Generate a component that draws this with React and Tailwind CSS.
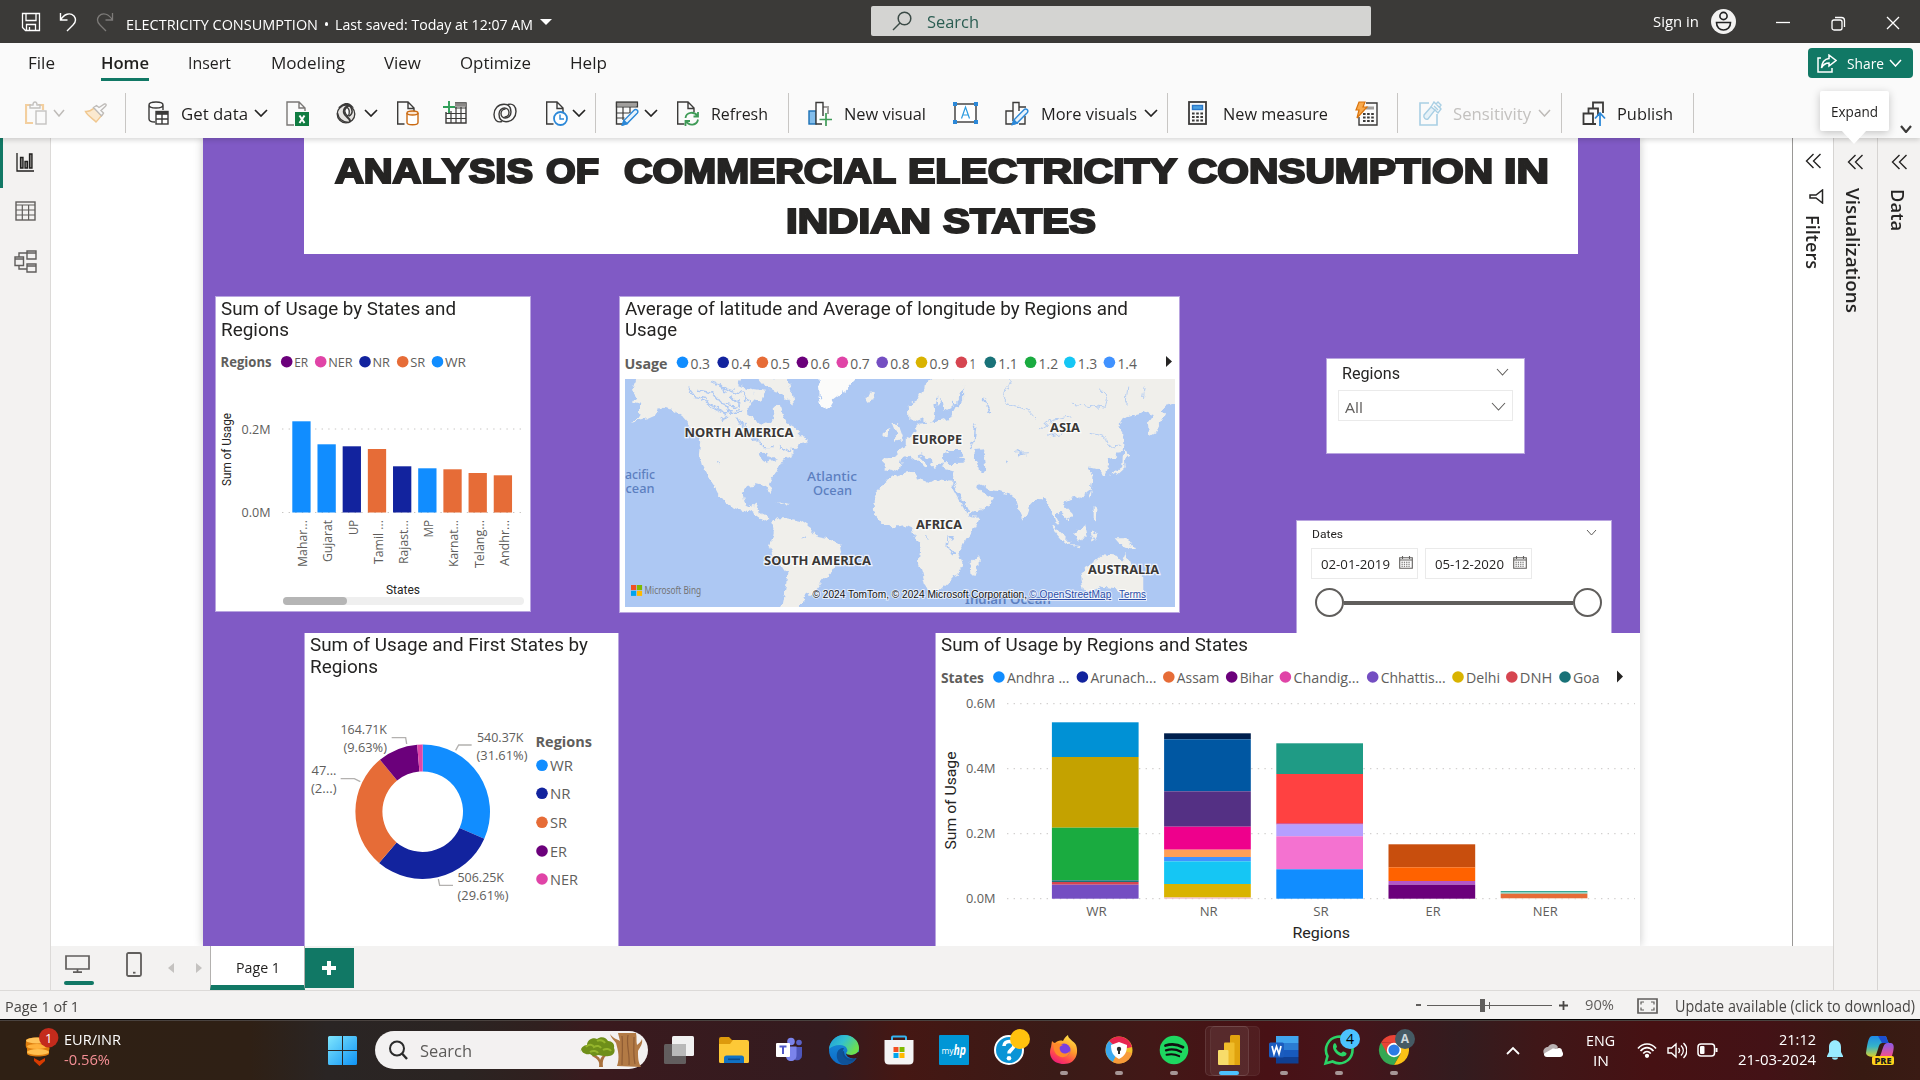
import React, { useLayoutEffect, useRef } from "react";

/* Text that is squeezed or stretched to the width of its box */
function Fit({ className = "", vertical = false, children }) {
  const box = useRef(null);
  const ink = useRef(null);
  useLayoutEffect(() => {
    const b = box.current;
    const i = ink.current;
    i.style.transform = "none";
    const r = vertical ? b.clientHeight / i.offsetHeight : b.clientWidth / i.getBoundingClientRect().width;
    i.style.transform = vertical ? `scaleY(${r})` : `scaleX(${r})`;
  }, [vertical, children]);
  return (
    <span ref={box} className={"block shrink-0 whitespace-nowrap " + className}>
      <span ref={ink} className={"inline-block origin-top-left whitespace-pre " + (vertical ? "[writing-mode:vertical-rl]" : "")}>
        {children}
      </span>
    </span>
  );
}

/* Chart text with a fixed run length */
function T({ x, y, w, size = 12, fill = "#605e5c", font = "Open Sans", weight = 400, rot, children, ...rest }) {
  return (
    <text
      x={x}
      y={y}
      textLength={w}
      lengthAdjust="spacingAndGlyphs"
      fontSize={size}
      fill={fill}
      fontWeight={weight}
      fontFamily={`"${font}", sans-serif`}
      transform={rot ? `rotate(${rot} ${x} ${y})` : undefined}
      {...rest}
    >
      {children}
    </text>
  );
}

function Ico({ w, h, className = "", children, ...p }) {
  return (
    <svg width={w} height={h} viewBox={`0 0 ${w} ${h}`} fill="none" stroke="#3b3a39" strokeWidth="1.4" className={"block shrink-0 " + className} {...p}>
      {children}
    </svg>
  );
}

const Chev = ({ className = "", color = "#252423", w = 14, h = 8, sw = 1.7 }) => (
  <Ico w={w} h={h} className={className} stroke={color} strokeWidth={sw}>
    <path d={`M1 1 L${w / 2} ${h - 1} L${w - 1} 1`} />
  </Ico>
);

const Sep = ({ className }) => <span className={"block h-10 w-px shrink-0 bg-[#c8c6c4] " + className} />;

/* ---------- title bar ---------- */
function TitleBar() {
  return (
    <div className="flex h-[43px] items-center bg-[#3b3a38] text-white">
      <Ico w={20} h={20} className="ml-[21px]" stroke="#fff" strokeWidth="1.3">
        <path d="M1.5 1.5h17v17h-14l-3-3zM5 1.5v7h10v-7M5.500 18.500v-6h9v6M8.500 18v-3" />
      </Ico>
      <Ico w={18} h={20} className="ml-[18px]" stroke="#fff" strokeWidth="1.4">
        <path d="M1.500 1v7h7M1.500 8C5 2 11 0 15 4c3 4 1 7-1 9l-6 6" />
      </Ico>
      <Ico w={18} h={20} className="ml-[19px]" stroke="#7d7b79" strokeWidth="1.3">
        <path d="M16.500 1v7h-7M16.500 8C13 2 7 0 3 4c-3 4-1 7 1 9l6 6" />
      </Ico>
      <div className="ml-[12px] flex items-center pt-[5px] text-[15px]">
        <Fit className="w-[192px]">ELECTRICITY CONSUMPTION</Fit>
        <span className="ml-[6.500px] size-[3.500px] rounded-full bg-white" />
        <Fit className="ml-[7px] w-[198px]">Last saved: Today at 12:07 AM</Fit>
      </div>
      <Ico w={12} h={6} className="ml-[7px]" stroke="none">
        <path d="M0 0h12l-6 6z" fill="#fff" />
      </Ico>
      <div className="ml-[319px] mb-[1px] flex h-[30px] w-[500px] items-center rounded-[2px] bg-[#d4d4d2]">
        <Ico w={20} h={20} className="ml-[21px]" stroke="#3b4a46" strokeWidth="1.5">
          <circle cx="12.500" cy="7.500" r="6.300" />
          <path d="M8 12 L1 19" />
        </Ico>
        <Fit className="ml-[15px] w-[52px] pt-[1px] text-base text-[#2b5d52]">Search</Fit>
      </div>
      <Fit className="ml-[282px] w-[46px] text-[14px]">Sign in</Fit>
      <Ico w={25} h={25} className="ml-[12px]" stroke="#222" strokeWidth="1.6">
        <circle cx="12.500" cy="12.500" r="12.500" fill="#f3f2f1" stroke="none" />
        <circle cx="12.500" cy="7" r="3.600" />
        <path d="M5.500 13.500h14c0 4.500-3 7.500-7 7.500s-7-3-7-7.500z" />
      </Ico>
      <Ico w={14} h={14} className="ml-[40px] mt-[3px]" stroke="#fff" strokeWidth="1.3">
        <path d="M0 6.500h14" />
      </Ico>
      <Ico w={15} h={15} className="ml-[41px] mt-[3px]" stroke="#fff" strokeWidth="1.3">
        <rect x="1" y="4" width="10" height="10" rx="2" />
        <path d="M4 1.500h6.500a3 3 0 0 1 3 3V11" />
      </Ico>
      <Ico w={14} h={14} className="ml-[40px] mt-[3px]" stroke="#fff" strokeWidth="1.3">
        <path d="M1 1l12 12M13 1L1 13" />
      </Ico>
    </div>
  );
}

/* ---------- ribbon ---------- */
const tabs = [
  ["File", "ml-[28px] w-[27px]"],
  ["Home", "ml-[46px] w-[48px] font-semibold"],
  ["Insert", "ml-[39px] w-[43px]"],
  ["Modeling", "ml-[40px] w-[74px]"],
  ["View", "ml-[39px] w-[37px]"],
  ["Optimize", "ml-[39px] w-[71px]"],
  ["Help", "ml-[39px] w-[37px]"],
];

const Page = ({ children }) => (
  <>
    <path d="M20 11V7l-6-6H1.700v22H9" stroke="none" fill="#fafafa" />
    <path d="M8.500 23H1.700V1H12l6 6v4M12 1v6.500h6" />
    {children}
  </>
);

const Pencil = ({ x = 0, y = 0 }) => (
  <g transform={`translate(${x} ${y})`} stroke="#2b88d8" strokeWidth="1.400">
    <path d="M1 16l1.400-4.500L12.500 1.200c1-1 2.800-.8 3.500.3.600.9.400 1.900-.3 2.700L5.600 14.600z" fill="#e8f3fc" />
    <path d="M1 16l1.400-4.500 3.200 3.100z" fill="#2b88d8" />
  </g>
);

function Ribbon() {
  return (
    <div className="relative z-10 h-[95px] bg-[#fafafa] text-[#201f1e] shadow-[0_2px_5px_rgba(0,0,0,0.16)]">
      <div className="flex h-[38px] items-start text-[17px]">
        {tabs.map(([name, cls]) => (
          <div key={name} className={"flex h-full items-center pt-1 " + (name === "Home" ? "border-b-[3px] border-[#117865] " : "border-b-[3px] border-transparent ") + cls}>
            <Fit className="w-full">{name}</Fit>
          </div>
        ))}
        <div className="ml-auto mr-[7px] mt-[5px] flex h-[30px] w-[105px] shrink-0 items-center rounded-[4px] bg-[#117865] text-white">
          <Ico w={20} h={19} className="ml-[9px]" stroke="#fff" strokeWidth="1.500">
            <path d="M4 4H1v14h14v-4M12 1l7 5.500-7 5.500V9C8 9 6 11 4.500 14 5 8 8 5 12 4.500z" />
          </Ico>
          <Fit className="ml-[10px] w-[37px] text-[15px]">Share</Fit>
          <Chev className="ml-[5px]" color="#fff" w={13} h={8} sw={1.500} />
        </div>
      </div>
      <div className="flex h-[57px] items-center pt-[7px] text-[17px]">
        <Ico w={22} h={24} className="ml-[25px]" stroke="#c4c2c0">
          <path d="M8 22H1V4h5M13 4h5v5" stroke="#f3cf9f" strokeWidth="2.200" />
          <path d="M5 7V4h3c0-4 4-4 4 0h3v3z" fill="#fafafa" />
          <rect x="11" y="10" width="10" height="13" fill="#fafafa" />
        </Ico>
        <Chev className="ml-[6px]" color="#bebbb8" w={12} sw={1.500} />
        <Ico w={23} h={20} className="ml-[19px]" stroke="#bebbb8">
          <path d="M1.500 8.500C6 9 9 6 11 4.500l7.500 7C16 14 15 16 12 19 9 16 3 12 1.500 8.500z" stroke="#f0c78f" fill="#fbe9cf" />
          <path d="M9.500 4.500l3-2 2.500 2 5.500-3.500c1.500-.5 2.300 1 1 2.200L17 7.500l2.500 2.500-2 3z" fill="#fafafa" />
        </Ico>
        <Sep className="ml-[18px]" />
        <Ico w={22} h={24} className="ml-[21px]">
          <path d="M2 4v14c0 2 3 3 6 3M16 4v5M2 4c0-4 14-4 14 0s-14 4-14 0z" />
          <rect x="9" y="10.500" width="12" height="12.500" fill="#fff" />
          <path d="M9 12.300h12" strokeWidth="3" />
          <path d="M15 13v10M9 18h12" />
        </Ico>
        <Fit className="ml-[12px] w-[67px] pt-px">Get data</Fit>
        <Chev className="ml-[6px]" />
        <Ico w={23} h={25} className="ml-[18px]" stroke="#797775">
          <path d="M8 24H1V1h12l6 6v3M13 1v6h6" />
          <rect x="9" y="11" width="14" height="14" fill="#107c41" stroke="none" />
          <path d="M13.500 14.500l5 7.500M18.500 14.500l-5 7.500" stroke="#fff" strokeWidth="2" />
        </Ico>
        <Ico w={20} h={21} className="ml-[27px]" strokeWidth="1.300">
          <circle cx="10" cy="11" r="8.800" fill="#e6e4e2" />
          <path d="M3 5C8 0 12 0 15 3 10 2 7 6 8 10s7 5 6 9" strokeWidth="2" />
          <path d="M1.500 10c1 6 6 9 11 9.500M14 3c3 4 3 8-1 10" strokeWidth="1.500" />
          <path d="M11 4c-3 3-3 6 1 9 2-3 2-6-1-9z" fill="#fff" />
        </Ico>
        <Chev className="ml-[8px]" />
        <Ico w={23} h={25} className="ml-[18px]">
          <Page />
          <g stroke="#ca6a12">
            <path d="M11 12v9.500c0 3 11 3 11 0V12" fill="#fff" />
            <ellipse cx="16.500" cy="12" rx="5.500" ry="2" fill="#fbe6d2" />
          </g>
        </Ico>
        <Ico w={24} h={24} className="ml-[24px]">
          <path d="M12 2h11v20H3V11" />
          <path d="M12 4h11" strokeWidth="3.500" stroke="#8a8886" />
          <path d="M12 7h11M3 12.500h20M3 17.500h20M8 10v12M13 6v16M18 6v16" strokeWidth="1.200" />
          <path d="M0 6h12M6 0v12" stroke="#2f9e58" strokeWidth="1.900" />
        </Ico>
        <Ico w={24} h={20} className="ml-[26px]">
          <path d="M9 18.500c-5 1.500-8-2-8-7C1 6 5 1.300 11 1.300c5 0 7 3.700 7 7.700s-3 6-5.500 6S8 13 8 10.500s2-4.500 4.500-4.500" />
          <path d="M15 1.500c5-1.500 8 2 8 7 0 5.500-4 10.200-10 10.200-5 0-7-3.700-7-7.700s3-6 5.500-6 4.500 2 4.500 4.500-2 4.500-4.500 4.500" />
        </Ico>
        <Ico w={23} h={25} className="ml-[28px]">
          <Page />
          <circle cx="15.500" cy="17.500" r="6.500" stroke="#2b88d8" strokeWidth="1.800" fill="#fff" />
          <path d="M15 13.500v4.500h4" stroke="#2b88d8" />
        </Ico>
        <Chev className="ml-[4px]" />
        <Sep className="ml-[9px]" />
        <Ico w={24} h={25} className="ml-[19px]">
          <path d="M8 23H1.500V1.500H22V6" />
          <path d="M1.500 3.500H22" strokeWidth="4" stroke="#a19f9d" />
          <path d="M1.500 1h21v5h-21zM1.500 12h13M1.500 17h8M8 6v13M15 6v6" strokeWidth="1.200" />
          <Pencil x={6.500} y={8} />
        </Ico>
        <Chev className="ml-[5px]" />
        <Ico w={23} h={25} className="ml-[18px]">
          <Page />
          <g stroke="#3f9b57" strokeWidth="1.800">
            <path d="M9.500 17c.5-6 9-7 12-2M22 11v4.500h-4.500M22 18.500c-1 6-9 7-12 1.500M9.500 25v-5H14" />
          </g>
        </Ico>
        <Fit className="ml-[12px] w-[57px] pt-px">Refresh</Fit>
        <Sep className="ml-[20px]" />
        <Ico w={24} h={25} className="ml-[19px]">
          <path d="M14 6h6v7" stroke="#a19f9d" strokeWidth="2" />
          <rect x="1" y="10" width="7" height="13" fill="#83beec" stroke="#1a6fb5" />
          <path d="M14 23H8V1.500h7V15" fill="#fff" />
          <path d="M18 12v13M11.500 18.500H24" stroke="#3f9b57" strokeWidth="1.700" />
        </Ico>
        <Fit className="ml-[12px] w-[82px] pt-px">New visual</Fit>
        <Ico w={25} h={22} className="ml-[27px]">
          <rect x="2" y="2" width="21" height="18" fill="#fff" />
          <path d="M0 0h4v4H0zM21 0h4v4h-4zM0 18h4v4H0zM21 18h4v4h-4z" fill="#2b88d8" stroke="none" />
          <path d="M8.500 16.500l4-11.500 4 11.500M9.800 13h5.400" stroke="#2b9be0" strokeWidth="1.200" />
        </Ico>
        <Ico w={24} h={25} className="ml-[27px]">
          <path d="M8 23H1V10h7M8 20V1.500h6V10M20 15v8h-6M14 6h7" strokeWidth="1.400" />
          <Pencil x={6.500} y={7.500} />
        </Ico>
        <Fit className="ml-[12px] w-[96px] pt-px">More visuals</Fit>
        <Chev className="ml-[7px]" />
        <Sep className="ml-[9px]" />
        <Ico w={19} h={24} className="ml-[20px]">
          <rect x="1" y="1" width="17" height="22" strokeWidth="1.800" />
          <rect x="4.500" y="4.500" width="10" height="4" fill="#4ba0e2" stroke="#2b78c8" />
          <path d="M4 12.500h11M4 16h11M4 19.500h11" strokeWidth="2.200" strokeDasharray="2.600 1.600" />
        </Ico>
        <Fit className="ml-[16px] w-[105px] pt-px">New measure</Fit>
        <Ico w={23} h={25} className="ml-[27px]">
          <path d="M11 2h11v22H4V16" />
          <path d="M11 7h8" stroke="#a19f9d" strokeWidth="3" />
          <path d="M8 13h11M8 16.500h11M8 20h11" strokeWidth="2.200" strokeDasharray="2.600 1.500" />
          <path d="M4 1h6L8 6h4L2 17l2-8H1z" fill="#f9a94b" stroke="#d9730d" strokeWidth="1.200" />
        </Ico>
        <Sep className="ml-[19px]" />
        <Ico w={23} h={25} className="ml-[21px]" stroke="#a9cfe4">
          <path d="M10 2H1v22h17V13" strokeWidth="1.600" />
          <path d="M5 14l7-8 4 3-7 9c-2 1-5-1-4-4z" fill="#e7f2f8" />
          <path d="M12 6l3-5 2 2 2-2 3 3-1.500 2L22 8l-3 4-3-3M15 5l4 4M17 3l4 4" />
        </Ico>
        <Fit className="ml-[11px] w-[78px] pt-px text-[#c3c1bf]">Sensitivity</Fit>
        <Chev className="ml-[7px]" color="#bebbb8" w={13} sw={1.500} />
        <Sep className="ml-[10px]" />
        <Ico w={24} h={25} className="ml-[20px]" strokeWidth="1.800">
          <path d="M11 8V1.500h10V12M6.500 12V7.500H16V15M14 23H1.500V12.500H11V23" />
          <path d="M18 25V12M13 17.500l5-5.500 5 5.500" stroke="#2b88d8" />
        </Ico>
        <Fit className="ml-[11px] w-[56px] pt-px">Publish</Fit>
        <Sep className="ml-[20px]" />
        <Chev className="ml-auto mr-[8px] mt-[32px]" w={12} h={8} sw={2.200} color="#3b3a39" />
      </div>
      <div className="absolute left-[1820px] top-[48px] flex h-[40px] w-[69px] items-center rounded-[2px] bg-white pl-[11px] pt-[1px] shadow-[0_2px_8px_rgba(0,0,0,0.22)]">
        <Fit className="w-[47px] text-[14.500px]">Expand</Fit>
        <svg className="absolute left-[21px] top-[39px]" width="26" height="15" viewBox="0 0 26 15">
          <path d="M0 0h26L13 14z" fill="#fff" />
        </svg>
      </div>
    </div>
  );
}

/* ---------- left rail ---------- */
function Rail() {
  return (
    <div className="flex w-[51px] shrink-0 flex-col border-r border-[#dcdad8] bg-[#f3f2f1]">
      <div className="flex h-[50px] items-center border-l-[3px] border-[#117865] pl-[13px] pb-[2px]">
        <Ico w={18} h={19} stroke="#201f1e" strokeWidth="1.300">
          <path d="M1 0v18h17" />
          <path d="M4.500 4.500h2.500V15H4.500zM9 8.500h2.500V15H9zM13.500 1h2.500v14h-2.500z" fill="#8a8886" />
        </Ico>
      </div>
      <Ico w={21} h={20} className="ml-[15px] mt-[13px]" stroke="#605e5c">
        <rect x="1" y="1" width="19" height="18" />
        <path d="M1 4h19M1 9h19M1 14h19M7.300 4v15M13.600 4v15" strokeWidth="1.200" />
      </Ico>
      <Ico w={23} h={23} className="ml-[14px] mt-[29px]" stroke="#605e5c">
        <path d="M13 1h9v8h-9zM13 3h9M1 7h8.500v8.500H1zM1 9h8.500M13 14h9v8h-9zM13 16h9M5 7V3h8M5 15.500V19h8" />
      </Ico>
    </div>
  );
}

/* ---------- report visuals ---------- */
const C = { WR: "#118dff", NR: "#12239e", SR: "#e66c37", ER: "#6b007b", NER: "#e044a7" };

const statesBars = [
  ["Mahar...", 421.3, C.WR, 47],
  ["Gujarat", 444.3, C.WR, 42],
  ["UP", 446.3, C.NR, 15],
  ["Tamil ...", 449, C.SR, 44],
  ["Rajast...", 466.3, C.NR, 44],
  ["MP", 468.3, C.WR, 17.500],
  ["Karnat...", 469.3, C.SR, 47],
  ["Telang...", 473, C.SR, 48],
  ["Andhr...", 475.3, C.SR, 46],
];

const Dot = ({ x, y, c }) => <circle cx={x} cy={y} r="5.800" fill={c} />;
const Grid = ({ x1, x2, y }) => <path d={`M${x1} ${y}H${x2}`} stroke="#c8c6c4" strokeWidth="1" strokeDasharray="1.400 5.200" />;

const titleCls = "text-[18px] leading-[21px] text-[#252423] [font-family:Roboto,sans-serif]";

function StatesChart() {
  return (
    <div className="absolute left-[12px] top-[158px] h-[316px] w-[315.500px] border border-[#b9a5e0] bg-white">
      <div className={"h-[43px] pl-[5px] pt-[1px] " + titleCls}>
        <Fit className="w-[235px]">Sum of Usage by States and</Fit>
        <Fit className="w-[68px]">Regions</Fit>
      </div>
      <svg width="313" height="270" viewBox="216 340 313 270" className="block">
        <T x={220.500} y={367} w={51} size={13.500} weight={700}>Regions</T>
        {[
          ["ER", 286.700, C.ER, 14], ["NER", 320.700, C.NER, 24.500], ["NR", 365, C.NR, 17.500], ["SR", 402.700, C.SR, 15], ["WR", 437.500, C.WR, 21],
        ].map(([n, x, c, w]) => (
          <g key={n}>
            <Dot x={x} y={361.700} c={c} />
            <T x={x + 7.500} y={367} w={w} size={13.300}>{n}</T>
          </g>
        ))}
        <Grid x1={282} x2={522} y={429} />
        <Grid x1={282} x2={522} y={512.500} />
        <T x={241.500} y={434} w={29} size={12.300}>0.2M</T>
        <T x={241.500} y={517} w={29} size={12.300}>0.0M</T>
        {statesBars.map(([n, top, c, w], i) => {
          const x = 292.300 + 25.180 * i;
          return (
            <g key={n}>
              <rect x={x} y={top} width="18.300" height={512.500 - top} fill={c} />
              <T x={x + 15} y={520 + w} w={w} size={12.300} rot={-90}>{n}</T>
            </g>
          );
        })}
        <T x={231.300} y={486} w={73} size={12.500} rot={-90} fill="#252423" font="Roboto">Sum of Usage</T>
        <T x={386} y={594} w={34} size={12} fill="#252423" font="Roboto">States</T>
        <rect x="283" y="597" width="241" height="8" rx="4" fill="#efefef" />
        <rect x="283" y="597" width="64" height="8" rx="4" fill="#b5b5b5" />
      </svg>
    </div>
  );
}

const usageLegend = [
  ["0.3", 682.500, "#118dff"], ["0.4", 723.200, "#12239e"], ["0.5", 762.400, "#e66c37"], ["0.6", 802.400, "#6b007b"],
  ["0.7", 842.300, "#e044a7"], ["0.8", 882.200, "#744ec2"], ["0.9", 921.500, "#d9b300"], ["1", 961.400, "#d64550"],
  ["1.1", 990.300, "#197278"], ["1.2", 1030.600, "#1aab40"], ["1.3", 1069.800, "#15c6f4"], ["1.4", 1109.400, "#4092ff"],
];

function WorldMap() {
  const lab = { size: 13, weight: 700, fill: "#3a3836", font: "Noto Sans", stroke: "#fff", strokeWidth: 2.500, strokeOpacity: 0.8, paintOrder: "stroke" };
  const sea = { size: 12, fill: "#5c7fc0", font: "Noto Sans", weight: 500 };
  return (
    <svg width="550" height="228" viewBox="0 0 550 228" className="ml-[5px] block">
      <defs>
        <filter id="coast" x="0" y="0" width="100%" height="100%">
          <feTurbulence type="fractalNoise" baseFrequency="0.13" numOctaves="3" seed="4" />
          <feDisplacementMap in="SourceGraphic" scale="8" xChannelSelector="R" yChannelSelector="G" />
        </filter>
      </defs>
      <rect width="550" height="228" fill="#adc8f3" />
      <g filter="url(#coast)">
        <rect x="-10" y="-10" width="570" height="250" fill="#adc8f3" />
        <g transform="scale(.36991 .33333) translate(-41 -267)" fill="#f0efeb">
          <path d="M55 255L70 270 60 300 72 318 60 335 88 342 75 362 90 372 60 395 100 388 120 378 135 352 165 358 190 375 210 400 232 425 247 455 243 500 250 530 265 560 285 592 278 580 292 610 310 632 325 645 350 657 375 664 400 678 418 692 434 690 420 675 408 668 405 652 398 640 380 655 362 640 357 610 370 588 400 583 420 588 435 612 442 606 430 580 437 565 450 545 460 522 472 505 500 492 490 480 512 465 535 455 520 435 500 412 480 400 470 385 460 352 443 345 445 385 430 402 415 400 398 392 375 380 372 350 392 332 385 300 330 285 270 255Z" />
          <path d="M220 262L300 258 360 262 350 285 330 300 290 300 230 290ZM400 262L480 262 490 300 498 345 480 335 455 305 430 300ZM385 300L425 305 410 330 390 325ZM440 262L480 275 470 300Z" />
          <path d="M560 262L566 300 570 345 590 358 604 330 640 300 672 262Z" fill="#fbfbfa" />
          <path d="M688 318L705 307 720 314 715 330 698 335ZM505 440L535 448 530 462 510 455Z" />
          <path d="M440 700L455 685 480 685 515 692 540 710 560 738 590 745 625 768 628 785 610 815 600 845 575 870 555 900 530 920 515 958 465 958 475 900 480 850 460 820 440 790 432 768 440 745 445 715Z" />
          <path d="M760 560L790 553 825 545 830 568 860 580 875 570 925 575 938 608 955 640 975 682 1000 683 990 710 960 750 945 790 955 825 925 870 900 895 870 908 855 895 845 850 833 810 838 770 825 745 820 715 800 705 760 712 735 700 712 670 710 640 720 610 745 580Z" />
          <path d="M975 852L972 822 997 795 997 820 985 857Z" />
          <path d="M743 540L743 505 775 503 775 485 800 465 800 445 828 425 832 402 850 400 880 395 920 382 935 350 955 330 955 255 1540 255 1540 340 1500 350 1480 375 1455 365 1420 375 1390 385 1375 410 1388 430 1388 470 1365 500 1340 512 1350 530 1338 562 1322 535 1305 530 1290 530 1305 560 1300 600 1270 625 1240 632 1225 640 1252 670 1240 692 1215 665 1205 680 1218 708 1200 690 1190 650 1170 615 1150 630 1130 655 1118 692 1105 660 1098 625 1080 610 1030 600 1012 588 995 580 985 585 1005 610 1038 625 1020 650 972 674 962 645 938 605 930 575 932 545 900 535 895 520 960 518 955 505 930 500 925 490 905 505 890 528 875 530 865 510 840 490 835 498 855 520 850 532 825 505 815 497 790 510 785 530 760 547Z" />
          <path d="M810 388L808 345 835 328 850 290 880 262 960 262 955 300 940 330 925 352 900 366 885 350 878 380 860 405 845 385 828 392Z" />
          <path d="M768 455L775 430 764 400 778 396 792 440 788 452ZM742 440L744 420 758 418 756 438Z" />
          <path d="M1458 440L1455 400 1485 355 1502 372 1475 430ZM1388 470L1395 490 1410 500 1390 512 1392 535 1375 552 1350 560 1385 528Z" />
          <path d="M1195 705L1212 718 1243 757 1232 762 1205 728ZM1252 735L1285 703 1292 740 1262 753ZM1240 765L1272 768 1270 775ZM1300 730L1322 722 1308 752ZM1365 745L1400 745 1422 780 1385 770ZM1308 650L1318 660 1316 700 1308 680ZM450 635L485 645 480 650ZM1295 620L1303 600 1300 625Z" />
          <path d="M1273 855L1285 830 1310 815 1335 793 1370 797 1385 815 1395 788 1410 830 1442 860 1442 900 1425 922 1400 927 1370 895 1330 890 1300 907 1282 902Z" />
          <g fill="#adc8f3">
            <path d="M903 515L900 495 915 480 945 480 958 498 935 505ZM988 480L1005 478 1012 505 1015 540 1000 545 990 510ZM990 582L1008 592 1030 600 1025 612 1005 605ZM400 490L425 488 435 505 455 505 430 518 405 510ZM888 340L900 330 905 360 885 385ZM880 345L888 318 885 380ZM915 735L930 735 925 750Z" />
          </g>
          <g fill="none" stroke="#adc8f3" strokeWidth="4">
            <path d="M925 580L968 668" strokeWidth="9" />
            <path d="M240 300L280 310 300 340 340 350 350 330M250 330L290 350 320 380 300 390M290 280L320 300 360 310 380 340M340 380L350 400 390 440 410 470 440 470M210 290L230 320 260 325M420 290L450 310 440 330M310 350L330 370 360 370M385 440L400 455M460 470L490 490M925 340L945 345M915 735L912 770 930 795M1010 320L1030 370M990 400L985 450 975 480" />
            <path d="M270 275L300 285 310 310M325 320L350 345 345 365M265 345L300 365 335 365M360 400L380 425M395 300L400 285M290 515L300 518M515 740L530 742M855 740L862 745M1100 485L1120 492 1105 497M1075 515L1070 522" />
            <path d="M1085 267L1065 320 1080 345 1130 360 1150 385M1250 340L1290 345 1340 355 1345 320 1320 290M1395 345L1400 290M1440 320L1445 290M1300 430L1340 440 1350 470 1380 465M1090 490L1130 485M1180 440L1240 420M1160 420L1200 390 1250 380" strokeWidth="2.500" />
          </g>
        </g>
      </g>
      <T x={0} y={100} w={30} {...sea}>acific</T>
      <T x={0.500} y={113.500} w={29} {...sea}>cean</T>
      <T x={182} y={102} w={50} {...sea}>Atlantic</T>
      <T x={188} y={115.500} w={39} {...sea}>Ocean</T>
      <T x={340} y={225.300} w={86} {...sea} weight={600}>Indian Ocean</T>
      <T x={59.500} y={58} w={109} {...lab}>NORTH AMERICA</T>
      <T x={287} y={64.500} w={50} {...lab}>EUROPE</T>
      <T x={425} y={53.300} w={30} {...lab}>ASIA</T>
      <T x={291} y={149.700} w={46} {...lab}>AFRICA</T>
      <T x={139} y={186} w={107} {...lab}>SOUTH AMERICA</T>
      <T x={463} y={195} w={71} {...lab}>AUSTRALIA</T>
      <path d="M6 206h5.200v5.100H6z" fill="#f25022" />
      <path d="M11.900 206h5.200v5.100h-5.200z" fill="#7fba00" />
      <path d="M6 211.800h5.200v5.100H6z" fill="#00a4ef" />
      <path d="M11.900 211.800h5.200v5.100h-5.200z" fill="#ffb900" />
      <T x={19.600} y={214.700} w={56.500} size={10} fill="#737373" font="Noto Sans">Microsoft Bing</T>
      <g stroke="#fff" strokeWidth="2" strokeOpacity=".7" paintOrder="stroke">
        <T x={187.500} y={219} w={214.500} size={10.500} fill="#111" font="Liberation Sans">© 2024 TomTom, © 2024 Microsoft Corporation,</T>
        <T x={404.300} y={219} w={82} size={10.500} fill="#2e4fa8" font="Liberation Sans" textDecoration="underline">© OpenStreetMap</T>
        <T x={494} y={219} w={27} size={10.500} fill="#2e4fa8" font="Liberation Sans" textDecoration="underline">Terms</T>
      </g>
    </svg>
  );
}

function MapCard() {
  return (
    <div className="absolute left-[416px] top-[158px] h-[317px] w-[561px] border border-[#b9a5e0] bg-white">
      <div className={"h-[43px] pl-[5px] pt-[1px] " + titleCls}>
        <Fit className="w-[503px]">Average of latitude and Average of longitude by Regions and</Fit>
        <Fit className="w-[52px]">Usage</Fit>
      </div>
      <svg width="559" height="39" viewBox="620 340 559 39" className="block">
        <T x={624.500} y={368.500} w={43} size={13.500} weight={700}>Usage</T>
        {usageLegend.map(([n, x, c]) => (
          <g key={n}>
            <Dot x={x} y={362.300} c={c} />
            <T x={x + 8} y={368.600} w={n === "1" ? 6.500 : 19.500} size={13.800}>{n}</T>
          </g>
        ))}
        <path d="M1166 356l6 5.500-6 5.500z" fill="#252423" />
      </svg>
      <WorldMap />
    </div>
  );
}

function RegionSlicer() {
  return (
    <div className="absolute left-[1123px] top-[220px] h-[96px] w-[199px] border border-[#b9a5e0] bg-white">
      <div className="flex h-[30px] items-center pl-[14.500px] [font-family:Roboto,sans-serif]">
        <Fit className="w-[58px] text-[16px] leading-[20px] text-[#252423]">Regions</Fit>
        <Chev className="ml-[96px] mb-[4px]" w={13} h={8} sw={1.100} color="#605e5c" />
      </div>
      <div className="ml-[11px] mt-[1px] flex h-[30.500px] w-[174.500px] items-center border border-[#eaeaea]">
        <Fit className="ml-[5.500px] w-[17.500px] pt-[3px] text-[15px] text-[#605e5c]">All</Fit>
        <Chev className="ml-[129px] mt-[2px]" w={15} h={9} sw={1.100} color="#605e5c" />
      </div>
    </div>
  );
}

const Cal = ({ className }) => (
  <Ico w={14} h={13} className={className} stroke="#605e5c" strokeWidth="1.100">
    <path d="M.7 1.700h12.600v10.600H.7zM.7 4h12.600M3.500 0v3M10.500 0v3" />
    <path d="M2.500 6.300h9M2.500 8.300h9M2.500 10.300h9" strokeDasharray="1.300 1" />
  </Ico>
);

function DateSlicer() {
  return (
    <div className="absolute left-[1093px] top-[382px] h-[126px] w-[316px] border border-[#b9a5e0] bg-white">
      <div className="flex h-[27px] items-center pl-[14.500px] [font-family:Roboto,sans-serif]">
        <Fit className="w-[31px] text-[11.500px] text-[#252423]">Dates</Fit>
        <Chev className="ml-[243.500px] mb-[4px]" w={11} h={7} sw={1} color="#605e5c" />
      </div>
      <div className="flex gap-[6.500px] pl-[13.500px]">
        {["02-01-2019", "05-12-2020"].map((d) => (
          <div key={d} className="flex h-[30.500px] w-[107.500px] items-center border border-[#eaeaea] pl-[9px]">
            <Fit className="w-[69px] pt-[2px] text-[12.800px] text-[#252423]">{d}</Fit>
            <Cal className="ml-[9.500px] mb-[2px]" />
          </div>
        ))}
      </div>
      <div className="flex h-[48px] items-center pl-[18px]">
        <span className="size-[29px] shrink-0 rounded-full border-2 border-[#605e5c] bg-white" />
        <span className="h-[4px] w-[229px] bg-[#605e5c]" />
        <span className="size-[29px] shrink-0 rounded-full border-2 border-[#605e5c] bg-white" />
      </div>
    </div>
  );
}

function arc(cx, cy, r1, r0, a, b) {
  const p = (r, t) => `${cx + r * Math.sin((t * Math.PI) / 180)} ${cy - r * Math.cos((t * Math.PI) / 180)}`;
  return `M${p(r1, a)}A${r1} ${r1} 0 0 1 ${p(r1, b)}L${p(r0, b)}A${r0} ${r0} 0 0 0 ${p(r0, a)}Z`;
}

function DonutCard() {
  const seg = [["WR", 0, 113.800], ["NR", 113.800, 220.400], ["SR", 220.400, 320.600], ["ER", 320.600, 355.300], ["NER", 355.300, 360]];
  return (
    <div className="absolute left-[101px] top-[495px] h-[314px] w-[315px] border-x border-[#b9a5e0] bg-white">
      <div className={"h-[47px] pl-[5px] pt-[1px] text-[18px] leading-[21.500px] text-[#252423] [font-family:Roboto,sans-serif]"}>
        <Fit className="w-[278px]">Sum of Usage and First States by</Fit>
        <Fit className="w-[68px]">Regions</Fit>
      </div>
      <svg width="313" height="265" viewBox="305 680 313 265" className="block">
        {seg.map(([k, a, b]) => <path key={k} d={arc(422.700, 811.700, 67.300, 40.300, a, b)} fill={C[k]} />)}
        <g transform="translate(290 630) scale(.33333)" fill="none" stroke="#b3b1af" strokeWidth="4">
          <path d="M305 323H347L350 342M545 345H506L497 361M152 446H193L211 455M489 766H449L445 747" />
        </g>
        <T x={340.500} y={734} w={46.500} size={12.500}>164.71K</T>
        <T x={343.500} y={752} w={43.500} size={12.500}>(9.63%)</T>
        <T x={477} y={742} w={46.500} size={12.500}>540.37K</T>
        <T x={476.500} y={760} w={51} size={12.500}>(31.61%)</T>
        <T x={311.500} y={774.700} w={25} size={12.500}>47...</T>
        <T x={311} y={793} w={25.500} size={12.500}>(2...)</T>
        <T x={457.500} y={882} w={46.500} size={12.500}>506.25K</T>
        <T x={457.500} y={900.300} w={51} size={12.500}>(29.61%)</T>
        <T x={535.500} y={746.700} w={56.500} size={14.500} weight={700}>Regions</T>
        {[["WR", 765.300, 23], ["NR", 793.300, 20.500], ["SR", 822.300, 17], ["ER", 851, 17], ["NER", 879, 28]].map(([n, y, w]) => (
          <g key={n}>
            <Dot x={542} y={y} c={C[n]} />
            <T x={550} y={y + 5.500} w={w} size={15}>{n}</T>
          </g>
        ))}
      </svg>
    </div>
  );
}

const stateLegend = [
  ["Andhra ...", 998.900, 62.500, "#118dff"], ["Arunach...", 1082.400, 66, "#12239e"], ["Assam", 1168.800, 42.500, "#e66c37"],
  ["Bihar", 1231.700, 34, "#6b007b"], ["Chandig...", 1285.400, 66, "#e044a7"], ["Chhattis...", 1372.700, 65, "#744ec2"],
  ["Delhi", 1458, 34, "#d9b300"], ["DNH", 1511.800, 32.500, "#d64550"], ["Goa", 1565, 26.500, "#197278"],
];

/* Each stack lists the top edge and fill of its segments, from the top down, in page pixels */
const stacks = [
  ["WR", 20.500, [[722.300, "#0091d5"], [757, "#c4a200"], [827.700, "#1aab40"], [880.300, "#197278"], [882, "#d64550"], [884.700, "#744ec2"]]],
  ["NR", 18, [[733.300, "#00204e"], [739.300, "#0057a2"], [791.300, "#543084"], [826.700, "#ee008c"], [849.700, "#ff9f57"], [857, "#4092ff"], [861.300, "#15c6f4"], [884, "#d9b300"], [897.500, "#f0b8c8"]]],
  ["SR", 15.500, [[743.300, "#1f9b85"], [774, "#ff4141"], [823.300, "#c02d86"], [824.500, "#b59fff"], [836.300, "#f472d0"], [869.300, "#118dff"]]],
  ["ER", 15, [[844.300, "#c84e0d"], [867.300, "#ff6200"], [881, "#b356c9"], [884.700, "#6b007b"]]],
  ["NER", 25, [[891, "#37a794"], [892.300, "#7ad3bf"], [893.700, "#e66c37"], [898, "#f3c6a8"]]],
];

function StackCard() {
  return (
    <div className="absolute left-[732px] top-[495px] h-[313px] w-[705px] border-l border-[#b9a5e0] bg-white">
      <div className={"h-[27px] pl-[5px] pt-[1px] " + titleCls}>
        <Fit className="w-[307px]">Sum of Usage by Regions and States</Fit>
      </div>
      <svg width="703" height="285" viewBox="936 660 703 285" className="block">
        <T x={941} y={683} w={43} size={14.300} weight={700}>States</T>
        {stateLegend.map(([n, x, w, c]) => (
          <g key={n}>
            <Dot x={x} y={677} c={c} />
            <T x={x + 8} y={683} w={w} size={14.500}>{n}</T>
          </g>
        ))}
        <path d="M1617 670.500l6 6-6 6z" fill="#252423" />
        {[["0.6M", 703.700], ["0.4M", 768.700], ["0.2M", 833.700], ["0.0M", 898.700]].map(([n, y]) => (
          <g key={n}>
            <Grid x1={1007} x2={1635} y={y} />
            <T x={966} y={y + 4.600} w={29.500} size={12.300}>{n}</T>
          </g>
        ))}
        {stacks.map(([n, w, parts], i) => {
          const x = 1051.900 + 112.200 * i;
          return (
            <g key={n}>
              {parts.map(([y, c], k) => (
                <rect key={k} x={x} y={y} width="86.700" height={(k + 1 < parts.length ? parts[k + 1][0] : 898.700) - y} fill={c} />
              ))}
              <T x={x + 44.600 - w / 2} y={916} w={w} size={12.300}>{n}</T>
            </g>
          );
        })}
        <T x={955.700} y={849.500} w={98} size={15} rot={-90} fill="#252423" font="Roboto">Sum of Usage</T>
        <T x={1292.500} y={937.500} w={57.500} size={14.500} fill="#252423" font="Roboto">Regions</T>
      </svg>
    </div>
  );
}

function Report() {
  return (
    <div className="h-full w-[1741px] shrink-0 overflow-hidden bg-white pl-[152px]">
      <div className="relative h-full w-[1437px] bg-[#805ac5] shadow-[0_0_9px_rgba(0,0,0,0.22)]">
        <div className="absolute left-[101px] top-0 h-[116px] w-[1274px] bg-white pt-[8px] text-[35.500px] font-bold leading-[50px] text-[#252423] [-webkit-text-stroke:2.200px_#252423] [font-family:'Liberation_Sans',Arial,sans-serif]">
          <div className="flex pl-[31px]">
            <Fit className="w-[198px]">ANALYSIS</Fit>
            <Fit className="ml-[13px] w-[53px]">OF</Fit>
            <Fit className="ml-[25px] w-[272px]">COMMERCIAL</Fit>
            <Fit className="ml-[12px] w-[269px]">ELECTRICITY</Fit>
            <Fit className="ml-[11px] w-[305px]">CONSUMPTION</Fit>
            <Fit className="ml-[11px] w-[45px]">IN</Fit>
          </div>
          <div className="flex pl-[482px]">
            <Fit className="w-[145px]">INDIAN</Fit>
            <Fit className="ml-[12px] w-[153px]">STATES</Fit>
          </div>
        </div>
        <StatesChart />
        <MapCard />
        <RegionSlicer />
        <DateSlicer />
        <DonutCard />
        <StackCard />
      </div>
    </div>
  );
}

/* ---------- collapsed panes ---------- */
const Dbl = ({ className }) => (
  <Ico w={17} h={16} className={className} stroke="#252423" strokeWidth="1.400">
    <path d="M8.500 1l-7 7 7 7M15.500 1l-7 7 7 7" />
  </Ico>
);

function PageTabs() {
  return (
    <div className="flex h-[44px] bg-[#f3f2f1]">
      <div className="ml-[13px] flex w-[30px] flex-col items-center pt-[9px]">
        <Ico w={25} h={18} className="mr-[3px]" stroke="#605e5c" strokeWidth="1.700">
          <path d="M1 1h23v13H1zM12.500 14v3M8 17.200h9" />
        </Ico>
        <span className="mt-[8px] h-[4px] w-full rounded-full bg-[#117865]" />
      </div>
      <Ico w={16} h={25} className="ml-[31.500px] mt-[6px]" stroke="#605e5c" strokeWidth="1.800">
        <rect x="1" y="1" width="14" height="23" rx="1.500" />
        <path d="M7 20.700h2.500" />
      </Ico>
      <Ico w={6} h={10} className="ml-[26px] mt-[17px]" stroke="none"><path d="M6 0v10L0 5z" fill="#c4c2c0" /></Ico>
      <Ico w={6} h={10} className="ml-[22px] mt-[17px]" stroke="none"><path d="M0 0v10l6-5z" fill="#c4c2c0" /></Ico>
      <div className="ml-[8.500px] flex w-[94.500px] items-center border-x border-b-[5px] border-x-[#b3b1af] border-b-[#117865] bg-white pl-[25px] pt-[4px]">
        <Fit className="w-[43.500px] text-[15px] text-[#201f1e]">Page 1</Fit>
      </div>
      <div className="mt-[2px] flex h-[40px] w-[49px] items-center justify-center bg-[#117865]">
        <Ico w={14} h={14} stroke="#fff" strokeWidth="4"><path d="M7 0v14M0 7h14" /></Ico>
      </div>
    </div>
  );
}

function StatusBar() {
  return (
    <div className="flex h-[29px] items-center border-t border-[#dcdad8] bg-[#f3f2f1] pl-[5px] text-[15px] text-[#484644]">
      <Fit className="w-[74px] pt-[2px]">Page 1 of 1</Fit>
      <span className="ml-[1337px] h-[2px] w-[5px] bg-[#605e5c]" />
      <div className="relative ml-[6px] h-px w-[125px] bg-[#605e5c]">
        <span className="absolute left-[53px] top-[-6px] h-[13px] w-[5px] bg-[#605e5c]" />
        <span className="absolute left-[62px] top-[-3px] h-[7px] w-px bg-[#605e5c]" />
      </div>
      <Ico w={9} h={9} className="ml-[7px]" strokeWidth="1.800" stroke="#484644"><path d="M4.500 0v9M0 4.500h9" /></Ico>
      <Fit className="ml-[17px] w-[29px] text-[14.500px] text-[#605e5c]">90%</Fit>
      <Ico w={21} h={16} className="ml-[23px] mt-[2px]" stroke="#605e5c" strokeWidth="1.700">
        <path d="M1 1h19v14H1z" />
        <path d="M4 6.500V4h3M14 4h3v2.500M17 9.500V12h-3M7 12H4V9.500" strokeWidth="1.200" />
      </Ico>
      <Fit className="ml-[17px] w-[240px] pt-[4px] text-[15.500px]">Update available (click to download)</Fit>
    </div>
  );
}

/* ---------- taskbar ---------- */
function TaskApp({ dot, active, children, badge }) {
  return (
    <div className="relative flex h-full w-[55px] shrink-0 items-center justify-center">
      {active && <span className="absolute left-[8px] top-[6px] h-[50px] w-[50px] rounded-[5px] border border-white/5 bg-white/5" />}
      {active && <span className="absolute left-[3px] top-[6px] h-[50px] w-[44px] rounded-[5px] border border-white/10 bg-white/5" />}
      <svg width="30" height="30" viewBox="0 0 30 30" className="relative block overflow-visible" fill="none">{children}</svg>
      {badge}
      {dot && <span className="absolute left-[23.500px] top-[51px] h-[4px] w-[8px] rounded-full bg-[#a69696]" />}
      {active && <span className="absolute left-[17.500px] top-[51px] h-[4px] w-[20px] rounded-full bg-[#4cc2ff]" />}
    </div>
  );
}

const badgeCls = "absolute left-[28.500px] top-[9px] flex size-[20px] items-center justify-center rounded-full ";

function Taskbar() {
  return (
    <div className="flex h-[61px] items-center border-t border-black bg-[linear-gradient(90deg,#2f2014_0%,#2f2015_13%,#2a2524_17%,#2b2422_24%,#30201f_28%,#3a1a1e_31%,#341b1f_43%,#451713_47%,#3a1b17_55%,#421817_60%,#481115_66%,#46141a_70%,#331c1f_76%,#3f1718_80%,#461113_86%,#431216_92%,#371a12_97%,#3a1b14_100%)] text-white shadow-[inset_0_1px_0_#4a4340]">
      <Ico w={34} h={38} className="ml-[25px] mb-[7px]" stroke="none">
        <path d="M1 12.500c0-4 21-4 21 0v5c3 1 3 3 2 5v3c0 4-22 4-22 0v-5c-2-2-1-5-1-8z" fill="#dd7d0e" />
        <ellipse cx="12" cy="12.500" rx="11" ry="3" fill="#ffc35a" />
        <ellipse cx="12" cy="18.500" rx="10" ry="2.600" fill="#ffb13b" />
        <ellipse cx="13" cy="24" rx="11" ry="3" fill="#ffc04f" />
        <circle cx="23.700" cy="9.700" r="9.700" fill="#c42b1c" />
        <text x="23.700" y="14.500" fontSize="13" textAnchor="middle" fill="#fff" fontFamily='"Open Sans", sans-serif'>1</text>
        <path d="M9 30l5.500 3 5.500-3v3l-5.500 5L9 33z" fill="#d83b01" />
      </Ico>
      <div className="ml-[5px] flex w-[58px] flex-col text-[14.500px] leading-[20px]">
        <Fit className="w-[57px]">EUR/INR</Fit>
        <Fit className="w-[46px] text-[#f58f95]">-0.56%</Fit>
      </div>
      <Ico w={29} h={29} className="ml-[206px]" stroke="none">
        <defs>
          <linearGradient id="win" x1="0" y1="0" x2="1" y2="1"><stop stopColor="#7fe6fd" /><stop offset="1" stopColor="#0f93f5" /></linearGradient>
        </defs>
        <path d="M0 1.500Q0 0 1.500 0H14v14H0zM15 0h12.500Q29 0 29 1.500V14H15zM0 15h14v14H1.500Q0 29 0 27.500zM15 15h14v12.500q0 1.500-1.500 1.500H15z" fill="url(#win)" />
      </Ico>
      <div className="ml-[18px] flex h-[38px] w-[273px] shrink-0 items-center rounded-full bg-[#f3f1f1]">
        <Ico w={19} h={20} className="ml-[14px]" stroke="#2b2b2b" strokeWidth="2">
          <circle cx="8" cy="8.500" r="7" />
          <path d="M13 13.500l5 5.500" strokeWidth="2.400" />
        </Ico>
        <Fit className="ml-[12px] w-[52px] pt-[2px] text-[16px] text-[#5c5a58]">Search</Fit>
        <Ico w={64} h={34} className="ml-[108px]" stroke="none">
          <path d="M19 34c1-5-1-8-7-11l1-2c4 2 7 3 7 6 1-3 3-5 8-8l1 1c-5 4-7 7-6 14z" fill="#a9713d" />
          <path d="M37 33c3-8 1-16-1-23-2-3-5-5-6-9 4 5 7 5 10 7l-2-8h18c1 4 0 8 1 12 2-2 4-3 5-6 1 5-2 8-4 12 0 6 0 11 3 16z" fill="#b27a45" />
          <path d="M42 3c1 10 0 20 0 29M48 2c-2 10 2 18 1 30M54 4c0 9-1 18 1 27" stroke="#8f5c34" strokeWidth="1.200" />
          <path d="M1 19c-1-4 3-7 6-7 0-5 6-8 10-6 4-3 9-2 11 2 4 0 7 3 6 7 2 4-1 8-5 8-5 1-8-1-11-1-3 2-6 1-8-1-4 1-9-1-9-6z" fill="#6f8f19" />
          <path d="M6 14c3-4 7-2 8 0 3-2 6-1 7 1M17 8c3-2 7 0 8 2M10 19c3-2 7-1 8 1M23 17c3-2 7-1 8 1" stroke="#95b52c" strokeWidth="2" />
        </Ico>
      </div>
      <span className="w-[3.500px] shrink-0" />
      <TaskApp>
        <rect x="8" y="1" width="22" height="20" rx="1.500" fill="#f1f1f1" />
        <rect x="0" y="9" width="22" height="20" rx="1.500" fill="#6a6a6a" fillOpacity=".85" />
        <rect x="8" y="9" width="14" height="12" fill="#b9b9b9" />
      </TaskApp>
      <TaskApp>
        <path d="M0 4Q0 2 2 2h8l3 3h15v6H0z" fill="#dd9a0c" />
        <path d="M0 9h11l3-4h14q2 0 2 2v19.500q0 1.500-1.500 1.500h-27Q0 28 0 26.500z" fill="#fdc937" />
        <path d="M5 28v-5q0-2.500 2.500-2.500h15Q25 20.500 25 23v5z" fill="#1172c4" />
        <path d="M9 24.300h12" stroke="#0a4a8a" strokeWidth="1.600" />
      </TaskApp>
      <TaskApp>
        <circle cx="25" cy="7.500" r="2.800" fill="#5b62c8" />
        <path d="M20 12h8v8c0 4-3 6-7 5z" fill="#4e56bb" />
        <circle cx="17" cy="6.500" r="3.800" fill="#7b83eb" />
        <path d="M12 11.500h10.500V20c0 4-2.500 6-5.500 6s-5-2-5-5z" fill="#7b83eb" />
        <rect x="2" y="8" width="14" height="14" rx="1" fill="#fff" />
        <path d="M5.500 11.500h7M9 11.500V19" stroke="#5059c9" strokeWidth="2" />
      </TaskApp>
      <TaskApp>
        <defs>
          <linearGradient id="e1" x1="0" y1="0" x2="1" y2=".5"><stop stopColor="#1f9ad6" /><stop offset=".5" stopColor="#33c1cf" /><stop offset="1" stopColor="#6de04e" /></linearGradient>
          <linearGradient id="e2" x1="0" y1="0" x2="0" y2="1"><stop stopColor="#1990dc" /><stop offset="1" stopColor="#0d6bc6" /></linearGradient>
        </defs>
        <circle cx="15" cy="15" r="15" fill="url(#e2)" />
        <path d="M10 18c0 7 6 11 12 9 2-1 4-2 5-4-6 2-12 0-12-7z" fill="#114a8b" />
        <path d="M15 30c-6-2-8-7-7-12 1-3 3-5 7-5-3 5-1 12 7 13 2 0 4-1 5-2-3 4-7 6-12 6z" fill="#0f5298" />
        <path d="M0 14C1 6 7 0 15 0c9 0 15 6 15 13 0 5-4 7-8 7-3 0-5-1-5-2 1-1 2-2 1-4-1-3-4-4-7-4-5 0-9 2-11 4z" fill="url(#e1)" />
        <path d="M17 18c0 1 2 2 5 2 3 0 5-1 7-3l2 .5-3 5.500c-6 1.500-11-1-11-5z" fill="#40161a" />
      </TaskApp>
      <TaskApp>
        <path d="M8 7V2.500Q8 1.500 9 1.500h12q1 0 1 1V7" stroke="#35b5f1" strokeWidth="2" />
        <path d="M0.500 5h29v20q0 4.500-4.500 4.500H5Q.5 29.500.5 25z" fill="#f4f4f4" />
        <path d="M9.500 12h5v5h-5z" fill="#f25022" /><path d="M15.500 12h5v5h-5z" fill="#7fba00" />
        <path d="M9.500 18h5v5h-5z" fill="#00a4ef" /><path d="M15.500 18h5v5h-5z" fill="#ffb900" />
      </TaskApp>
      <TaskApp>
        <rect width="30" height="30" rx="1" fill="#0096d6" />
        <text x="2.500" y="18.500" fontSize="9.500" fill="#fff" textLength="12" lengthAdjust="spacingAndGlyphs" fontFamily='"Open Sans", sans-serif'>my</text>
        <text x="14.500" y="19.500" fontSize="14" fontStyle="italic" fontWeight="700" fill="#fff" textLength="12.500" lengthAdjust="spacingAndGlyphs" fontFamily='"Open Sans", sans-serif'>hp</text>
      </TaskApp>
      <TaskApp badge={<span className={badgeCls + "bg-[#ffc20e]"} />}>
        <circle cx="15" cy="15" r="14" fill="#0a94d6" stroke="#fff" strokeWidth="2" />
        <path d="M10 11c0-6 10-6 10-.5 0 4-5 4-5 8" stroke="#fff" strokeWidth="3.600" />
        <circle cx="15" cy="23.300" r="2.300" fill="#fff" />
      </TaskApp>
      <TaskApp dot>
        <defs>
          <linearGradient id="ff" x1=".8" y1="0" x2=".3" y2="1"><stop stopColor="#ffe94a" /><stop offset=".45" stopColor="#ff9a2b" /><stop offset=".75" stopColor="#ff4a4e" /><stop offset="1" stopColor="#ec1c78" /></linearGradient>
        </defs>
        <path d="M3 6c1 1 2 2 3 2 2-2 5-3 8-2 1-2 2-4 5-6 0 4 6 6 8 10 3 8 0 19-12 19S-1 20 2 12z" fill="url(#ff)" />
        <circle cx="15" cy="15" r="6.500" fill="#7a3fe0" />
        <path d="M5 9c4-2 7 0 9 1-3 1-4 2-3 5 1 4 6 5 10 1-1 7-10 8-14 3-2-3-3-6-2-10z" fill="#ff8a2a" />
      </TaskApp>
      <TaskApp dot>
        <circle cx="15" cy="15" r="13.500" fill="#f2bf2b" />
        <path d="M15 1.500A13.500 13.500 0 0 1 28 12L15 15 5 6C8 3 11 1.500 15 1.500z" fill="#e8254f" />
        <path d="M5 6A13.500 13.500 0 0 0 9 27l6-12z" fill="#3aa8ef" />
        <path d="M9 27c7 4 17 0 19-9l-13-3z" fill="#f79a3a" />
        <path d="M15 7l8 3c0 7-2 11-8 14-6-3-8-7-8-14z" fill="#fff" />
        <circle cx="15" cy="14" r="2.200" fill="#2b2b2b" /><path d="M14 15h2v4h-2z" fill="#2b2b2b" />
      </TaskApp>
      <TaskApp dot>
        <circle cx="15" cy="15" r="14.300" fill="#1ed760" />
        <g stroke="#101010" strokeLinecap="round"><path d="M6.500 10.500c6-1.800 12-1.200 17.500 1.700" strokeWidth="2.800" /><path d="M7 15.300c5-1.400 10.500-.9 15 1.500" strokeWidth="2.300" /><path d="M7.500 19.800c4.500-1 9-.6 12.700 1.400" strokeWidth="1.900" /></g>
      </TaskApp>
      <TaskApp active>
        <path d="M16 1.500Q16 0 17.500 0H25q1 0 1 1v29H16z" fill="#e0a30e" />
        <path d="M10 8.500Q10 7.500 11 7.500h8.500q1 0 1 1V30H10z" fill="#f0bd2a" />
        <path d="M4 16q0-1 1-1h8.500q1 0 1 1v14H5q-1 0-1-1z" fill="#f8dc6a" />
      </TaskApp>
      <TaskApp dot>
        <path d="M7 1h22.500v7H7z" fill="#41a5ee" /><path d="M7 8h22.500v7H7z" fill="#2b7cd3" />
        <path d="M7 15h22.500v7H7z" fill="#185abd" /><path d="M7 22h22.500v6.500H7z" fill="#103f91" />
        <rect x="0" y="7.500" width="15" height="15" rx="1.500" fill="#1b5cbe" />
        <path d="M3 11l2 8 2.500-7.500L10 19l2-8" stroke="#fff" strokeWidth="1.700" />
      </TaskApp>
      <TaskApp dot badge={<span className={badgeCls + "bg-[#4cc2ff] text-[14px] leading-none text-black"}>4</span>}>
        <path d="M1.500 28.500l2-7.300A13.300 13.300 0 1 1 8.600 26.500z" stroke="#2bd366" strokeWidth="2.600" />
        <path d="M10 8.500c1.500-1 2 0 3 3 0 1-1 1.500-1 2 1.500 2.500 3 3.800 5 4.500 1-.5 1.500-2 2.500-1.500 3.500 1.500 3.500 2 2.500 3.500-2 2.500-6 1.500-9-1s-5.500-7-3-10.500z" fill="#2bd366" />
      </TaskApp>
      <TaskApp dot badge={<span className={badgeCls + "bg-[#455a64] text-[12px] font-bold leading-none text-[#cfd8dc]"}>A</span>}>
        <path d="M15 15L2 7.500A15 15 0 0 0 15 30l6.500-11.500z" fill="#34a853" />
        <path d="M15 8h13.300A15 15 0 0 1 15 30l6.500-11.300z" fill="#fbc116" />
        <path d="M2 7.500A15 15 0 0 1 28.300 8H15z" fill="#ea4335" />
        <path d="M2 7.500L8.500 19 15 8z" fill="#ea4335" />
        <circle cx="15" cy="15" r="7.200" fill="#fff" /><circle cx="15" cy="15" r="5.600" fill="#2c7be5" />
      </TaskApp>
      <Ico w={14} h={9} className="ml-[84.500px]" stroke="#fff" strokeWidth="1.800"><path d="M1 8l6-6 6 6" /></Ico>
      <Ico w={20} h={14} className="ml-[23px]" stroke="none">
        <path d="M1 11c-2-4 1-7 4-7C7 0 13 0 15 4l-6 9H4c-1 0-2-1-3-2z" fill="#b9b1b2" />
        <path d="M4 14c-3 0-4-3-2-4l7-4c1-1 3 0 4 0 3-2 6-1 6 2 2 3 1 6-2 6z" fill="#fff" />
      </Ico>
      <div className="ml-[22.500px] flex w-[30px] flex-col items-center pt-px text-[14.500px] leading-[20px]">
        <Fit className="w-[29px]">ENG</Fit>
        <Fit className="w-[16px]">IN</Fit>
      </div>
      <Ico w={20} h={16} className="ml-[21.500px]" stroke="#fff" strokeWidth="1.700">
        <path d="M1 6.500c5-6 13-6 18 0M3.500 9c4-4.500 9-4.500 13 0M6.200 11.500c2.500-2.700 5-2.700 7.600 0" />
        <circle cx="10" cy="13.800" r="1.300" fill="#fff" />
      </Ico>
      <Ico w={20} h={17} className="ml-[10px]" stroke="#fff" strokeWidth="1.400">
        <path d="M1 6h3.500L9 2v13l-4.500-4H1zM11.500 6c1.300 1.500 1.300 3.500 0 5M14 3.500c3 3 3 7 0 10M16.500 1c4.500 4.500 4.500 10.500 0 15" />
      </Ico>
      <Ico w={21} h={14} className="ml-[10px]" stroke="#fff" strokeWidth="1.500">
        <rect x="1" y="1" width="16.500" height="12" rx="3" />
        <rect x="3" y="3" width="4.500" height="8" rx="1" fill="#fff" stroke="none" />
        <path d="M19.500 5v4" strokeWidth="2" />
      </Ico>
      <div className="ml-[20px] flex w-[78px] flex-col items-end text-[14.500px] leading-[20px]">
        <Fit className="w-[37px]">21:12</Fit>
        <Fit className="w-[78px]">21-03-2024</Fit>
      </div>
      <Ico w={16} h={20} className="ml-[11px]" stroke="none">
        <path d="M2 7c0-9 12-9 12 0v5l2 4v1H0v-1l2-4zM5 17.500h6c0 3-6 3-6 0z" fill="#99ebff" />
      </Ico>
      <Ico w={30} h={30} className="ml-[22px]" stroke="none">
        <defs>
          <linearGradient id="cp1" x1="0" y1="0" x2="0" y2="1"><stop stopColor="#1e8be8" /><stop offset=".5" stopColor="#36b3c8" /><stop offset="1" stopColor="#d8d22c" /></linearGradient>
          <linearGradient id="cp2" x1="0" y1="0" x2="0" y2="1"><stop stopColor="#8a5be8" /><stop offset="1" stopColor="#f0508c" /></linearGradient>
        </defs>
        <path d="M7 1h13c2 0 2 5 4 7h-7c-2 0-3 2-4 6l-2 6c-1 3-10 2-10-2C2 12 3 1 7 1z" fill="url(#cp1)" />
        <path d="M13 1h7c2 0 2 5 4 7h-7z" fill="#1c4fd0" />
        <path d="M22 8h4c4 1 3 6 1 13H15c2-3 3-13 7-13z" fill="url(#cp2)" />
        <rect x="7" y="21" width="22" height="9" rx="2" fill="#ffd21c" />
        <text x="9.500" y="28.500" fontSize="8.500" fontWeight="800" fill="#1b1b1b" textLength="17" lengthAdjust="spacingAndGlyphs" fontFamily='"Open Sans", sans-serif'>PRE</text>
      </Ico>
    </div>
  );
}

export default function App() {
  return (
    <div className="flex h-[1080px] w-[1920px] flex-col overflow-hidden bg-white [font-family:'Open_Sans',sans-serif]">
      <TitleBar />
      <Ribbon />
      <div className="flex h-[852px]">
        <Rail />
        <div className="flex w-[1782px] shrink-0 flex-col">
          <div className="flex h-[808px]">
            <Report />
            <div className="flex w-[41px] flex-col items-center border-l border-[#9a9896] bg-white pt-[15px]">
              <Dbl />
              <Ico w={16} h={15} className="ml-[6px] mt-[20px]" stroke="#252423" strokeWidth="1.500">
                <path d="M14.500 1v13L8 9H2V6h6z" />
              </Ico>
              <Fit vertical className="mt-[11px] h-[54px] text-[17.500px] font-semibold leading-[24px] text-[#252423]">Filters</Fit>
            </div>
          </div>
          <PageTabs />
        </div>
        <div className="flex w-[44px] shrink-0 flex-col items-center border-l border-[#d6d4d2] bg-[#f3f2f1] pt-[16px]">
          <Dbl />
          <Fit vertical className="mr-[5px] mt-[18px] h-[125px] text-[17.500px] font-semibold leading-[24px] text-[#252423]">Visualizations</Fit>
        </div>
        <div className="flex w-[43px] shrink-0 flex-col items-center border-l border-[#d6d4d2] bg-[#f3f2f1] pt-[16px]">
          <Dbl />
          <Fit vertical className="mr-[3px] mt-[19px] h-[42px] text-[17.500px] font-semibold leading-[24px] text-[#252423]">Data</Fit>
        </div>
      </div>
      <StatusBar />
      <Taskbar />
    </div>
  );
}
